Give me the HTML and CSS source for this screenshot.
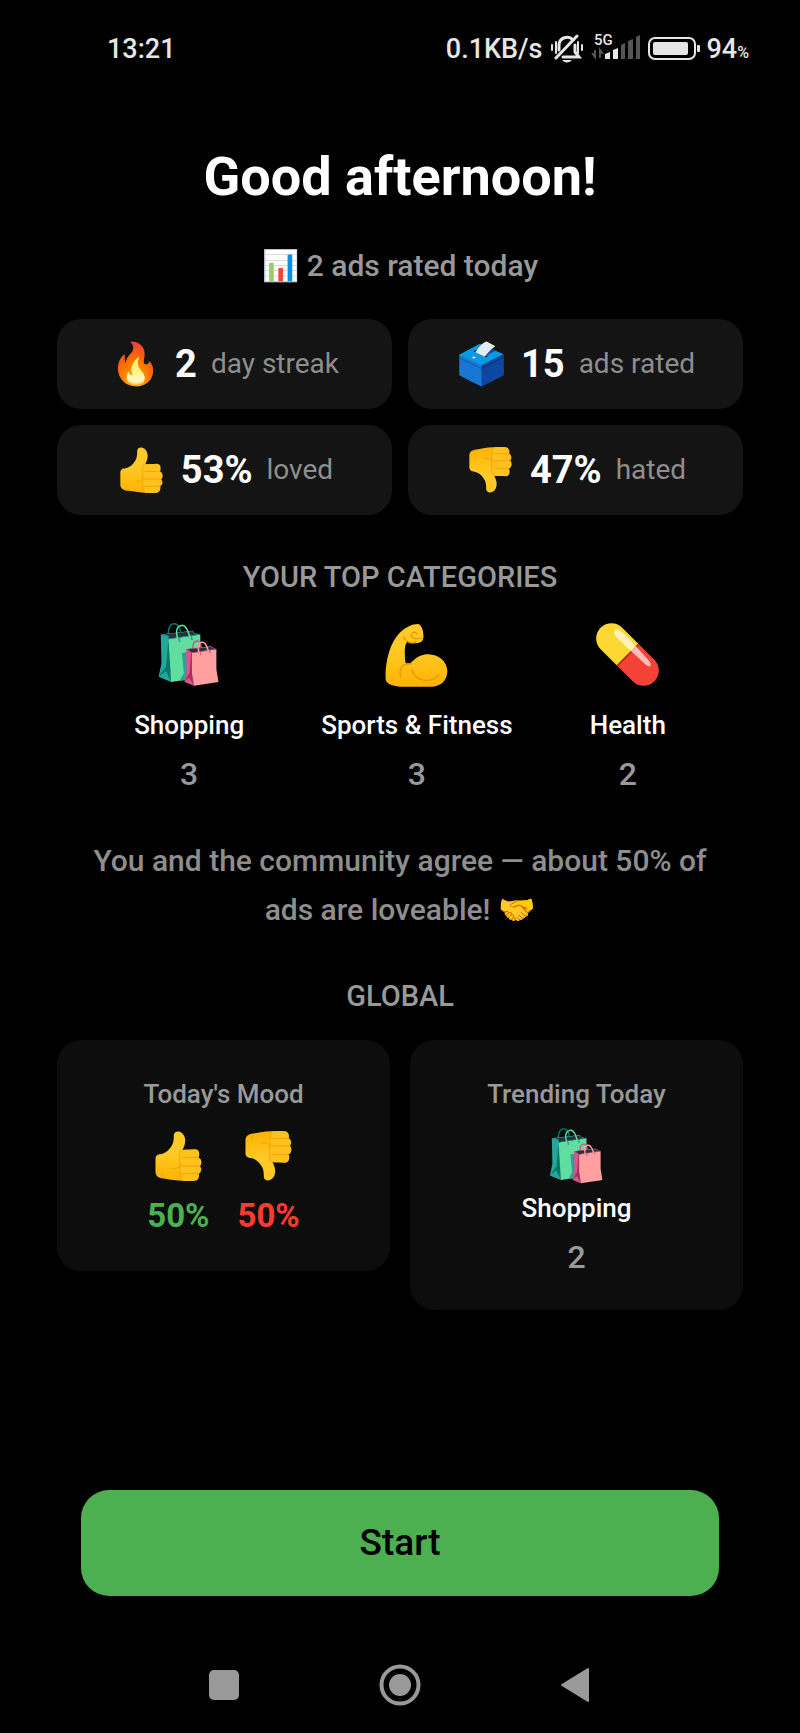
FILE: index.html
```html
<!DOCTYPE html>
<html lang="en">
<head>
  <meta charset="UTF-8">
  <meta name="viewport" content="width=device-width, initial-scale=1">
  <title>Good afternoon!</title>
  <link rel="stylesheet" href="styles.css">
</head>
<body>
<svg class="sprite" width="0" height="0" aria-hidden="true">
  <defs>
    <linearGradient id="skin" x1="0" y1="0" x2="0" y2="1">
      <stop offset="0.400" stop-color="#ffca28"/>
      <stop offset="1" stop-color="#ffb300"/>
    </linearGradient>
    <g id="thumb">
      <path d="M56 12C57-3 86-4 90 26C91 38 86 48 82 57L121 55C134 56 134 74 130 80C142 84 140 102 134 106C141 112 139 124 131 128C134 140 128 149 118 149C80 151 60 148 30 143C15 142 1 138 1 122V82C2 72 10 70 18 69C34 66 44 54 51 42C56 32 56 22 56 12Z" fill="url(#skin)"/>
      <path d="M84 56H120Q132 58 130 69Q130 80 118 80H84Q72 78 73 68Q74 58 84 56ZM82 81H124Q138 82 138 93Q136 105 124 105H82Q71 102 71 93Q72 83 82 81ZM82 106H122Q136 107 135 117Q133 128 122 128H82Q73 125 73 117Q74 108 82 106ZM84 129H118Q130 129 129 139Q127 149 116 149H84Q76 146 76 139Q77 131 84 129Z" fill="#ffc11e"/>
      <path d="M76 58L72 78M74 82V104M74 107V127M77 130V147M80 80H130M80 105H134M80 128H131M50 112Q68 116 76 104M20 124V140" fill="none" stroke="#e99a00" stroke-width="3" stroke-linecap="round" opacity="0.700"/>
    </g>
    <symbol id="thumbs-up" viewBox="0 0 140 150">
      <use href="#thumb"/>
    </symbol>
    <symbol id="thumbs-down" viewBox="0 0 140 150">
      <use href="#thumb" transform="translate(0 150) scale(1 -1)"/>
    </symbol>
    <symbol id="biceps" viewBox="0 0 188 190">
      <path d="M100 0C108 4 114 16 114 28C117 40 114 52 104 56C92 60 78 58 66 54C57 62 58 92 60 110C59 124 74 120 82 112C98 96 115 90 130 91C160 92 188 112 187 145C184 178 160 189 140 189H60C30 190 6 184 1 168C-2 120 12 60 42 28C60 10 80 0 100 0Z" fill="url(#skin)"/>
      <path d="M54 38C62 56 84 62 92 52M110 42C96 48 78 44 78 34C80 24 92 22 96 30M80 120C52 118 40 132 46 160M80 138C92 176 140 180 162 152" fill="none" stroke="#e69a00" stroke-width="4" stroke-linecap="round"/>
    </symbol>
  </defs>
</svg>

<header class="status-bar">
  <span>13:21</span>
  <div class="status-icons">
    <span>0.1KB/s</span>
    <svg viewBox="0 0 34 30" width="34" height="30" role="img" aria-label="Muted">
      <g fill="none" stroke="#e6e6e6" stroke-width="2" stroke-linecap="round">
        <path d="M2 11v5M6 8v11M28 8v11M32 11v5"/>
        <path d="M9 16V11a8 8 0 0 1 14-5M25 11v7l4 5H13" stroke-width="3"/>
        <path d="M27 2L6 24" stroke-width="3"/>
      </g>
      <path d="M12 26h10q-5 5-10 0" fill="#e6e6e6"/>
    </svg>
    <svg viewBox="0 -4 50 40" width="50" height="40" role="img" aria-label="5G signal">
      <text x="3" y="12" class="signal-label">5G</text>
      <path d="M1 20l3 4V17M9 25v-8l3 4" fill="none" stroke="#555" stroke-width="2"/>
      <path d="M14 21l5-2v7h-5zM22 17l5-2v11h-5z" fill="#e6e6e6"/>
      <path d="M30 12l4-2v16h-4zM37 8l5-2v20h-5zM45 4l4-2v24h-4z" fill="#555"/>
    </svg>
    <svg viewBox="0 0 52 24" width="52" height="24" role="img" aria-label="Battery">
      <rect x="1" y="1" width="46" height="21" rx="6" fill="none" stroke="#e6e6e6" stroke-width="2"/>
      <rect x="5" y="5" width="35" height="13" rx="2" fill="#e6e6e6"/>
      <rect x="49" y="8" width="3" height="7" rx="1" fill="#e6e6e6"/>
    </svg>
    <span>94<small>%</small></span>
  </div>
</header>

<main>
  <h1>Good afternoon!</h1>
  <p class="today">📊 2 ads rated today</p>

  <section class="stats">
    <div class="stat">
      <span class="stat-icon">🔥</span>
      <strong>2</strong>
      <span>day streak</span>
    </div>
    <div class="stat">
      <span class="stat-icon">🗳️</span>
      <strong>15</strong>
      <span>ads rated</span>
    </div>
    <div class="stat">
      <svg width="43" height="46" role="img" aria-label="Thumbs up"><use href="#thumbs-up"/></svg>
      <strong>53%</strong>
      <span>loved</span>
    </div>
    <div class="stat">
      <svg width="43" height="46" role="img" aria-label="Thumbs down"><use href="#thumbs-down"/></svg>
      <strong>47%</strong>
      <span>hated</span>
    </div>
  </section>

  <h2>YOUR TOP CATEGORIES</h2>
  <section class="categories">
    <div class="category">
      <span class="category-icon">🛍️</span>
      <span class="name">Shopping</span>
      <span class="count">3</span>
    </div>
    <div class="category">
      <svg width="63" height="63" role="img" aria-label="Flexed biceps"><use href="#biceps"/></svg>
      <span class="name">Sports &amp; Fitness</span>
      <span class="count">3</span>
    </div>
    <div class="category">
      <span class="category-icon">💊</span>
      <span class="name">Health</span>
      <span class="count">2</span>
    </div>
  </section>

  <p class="community">You and the community agree — about 50% of ads are loveable! 🤝</p>

  <h2>GLOBAL</h2>
  <section class="global">
    <div class="card">
      <h3>Today's Mood</h3>
      <div class="mood">
        <div class="vote loved">
          <svg width="47" height="50" role="img" aria-label="Thumbs up"><use href="#thumbs-up"/></svg>
          <strong>50%</strong>
        </div>
        <div class="vote hated">
          <svg width="47" height="50" role="img" aria-label="Thumbs down"><use href="#thumbs-down"/></svg>
          <strong>50%</strong>
        </div>
      </div>
    </div>
    <div class="card">
      <h3>Trending Today</h3>
      <div class="category">
        <span class="trending-icon">🛍️</span>
        <span class="name">Shopping</span>
        <span class="count">2</span>
      </div>
    </div>
  </section>

  <button class="start" type="button">Start</button>
</main>

<nav class="nav-bar">
  <button type="button" aria-label="Recent apps">
    <svg viewBox="0 0 42 42" width="42" height="42"><rect x="6" y="6" width="30" height="30" rx="5"/></svg>
  </button>
  <button type="button" aria-label="Home">
    <svg viewBox="0 0 42 42" width="42" height="42">
      <circle cx="21" cy="21" r="18.500" fill="none" stroke="#999" stroke-width="4"/>
      <circle cx="21" cy="21" r="11"/>
    </svg>
  </button>
  <button type="button" aria-label="Back">
    <svg viewBox="0 0 42 42" width="42" height="42">
      <path d="M7 21L33 5V37Z" stroke="#999" stroke-width="2" stroke-linejoin="round"/>
    </svg>
  </button>
</nav>
</body>
</html>
```

FILE: styles.css
```css
* {
  box-sizing: border-box;
}

body {
  display: flex;
  flex-direction: column;
  min-height: 100vh;
  margin: 0;
  background-color: #000;
  color: #999;
  font-family: Roboto, "Noto Color Emoji", sans-serif;
}

h1, h2, h3, p {
  margin: 0;
}

.sprite {
  display: block;
}

.status-bar {
  display: flex;
  justify-content: space-between;
  align-items: center;
  padding: 29px 51px 28px 107px;
  color: #e6e6e6;
  font-size: 27px;
  font-weight: 500;
  line-height: 32px;
}

.status-icons {
  display: flex;
  align-items: center;
  gap: 7px;
}

.signal-label {
  fill: #e6e6e6;
  font-size: 15px;
}

small {
  font-size: 16px;
  line-height: 16px;
}

main {
  display: flex;
  flex-direction: column;
  flex: 1;
  padding: 48px 57px 40px;
  text-align: center;
}

h1 {
  color: #fff;
  font-size: 54px;
  font-weight: 700;
  line-height: 64px;
}

.today {
  margin: 37px 0 33px;
  font-size: 30px;
  font-weight: 500;
  line-height: 40px;
}

.stats {
  display: grid;
  grid-template-columns: 1fr 1fr;
  gap: 16px;
}

.stat {
  display: flex;
  justify-content: center;
  align-items: center;
  gap: 14px;
  padding: 20px;
  border-radius: 24px;
  background-color: #141414;
  color: #8e8e8e;
  font-size: 28px;
  line-height: 50px;
}

.stat svg {
  margin: 0 4px;
}

.stat-icon {
  font-size: 41px;
}

.stat strong {
  color: #fff;
  font-size: 38px;
}

h2 {
  margin-top: 44px;
  font-size: 29px;
  font-weight: 500;
  line-height: 36px;
}

.categories {
  display: flex;
  justify-content: space-evenly;
  margin-top: 26px;
}

.category {
  display: flex;
  flex-direction: column;
  align-items: center;
}

.category svg {
  margin: 3px 0 22px;
}

.category-icon {
  margin-bottom: 20px;
  font-size: 57px;
  line-height: 68px;
}

.name {
  margin-bottom: 15px;
  color: #fff;
  font-size: 26px;
  font-weight: 500;
  line-height: 32px;
}

.count {
  font-size: 32px;
  font-weight: 500;
  line-height: 36px;
}

.community {
  margin-top: 44px;
  padding: 0 30px;
  color: #8e8e8e;
  font-size: 30px;
  font-weight: 500;
  line-height: 49px;
}

.global {
  display: flex;
  align-items: flex-start;
  gap: 20px;
  margin-top: 26px;
}

.card {
  flex: 1;
  padding: 38px 36px 35px;
  border-radius: 24px;
  background-color: #0d0d0d;
}

h3 {
  margin-bottom: 18px;
  font-size: 26px;
  font-weight: 500;
  line-height: 32px;
}

.mood {
  display: flex;
  justify-content: center;
  gap: 28px;
}

.vote {
  display: flex;
  flex-direction: column;
  align-items: center;
}

.vote svg {
  margin: 3px 0 15px;
}

.vote strong {
  font-size: 33px;
  line-height: 40px;
}

.loved {
  color: #4caf50;
}

.hated {
  color: #ff3b30;
}

.trending-icon {
  margin-bottom: 8px;
  font-size: 50px;
  line-height: 56px;
}

button {
  border: none;
  font-family: inherit;
  cursor: pointer;
}

.start {
  margin: auto 24px 0;
  padding: 32px;
  border-radius: 28px;
  background-color: #4caf50;
  color: #000;
  font-size: 37px;
  font-weight: 500;
  line-height: 42px;
}

.nav-bar {
  display: flex;
  justify-content: center;
  gap: 134px;
  padding: 28px 0 27px;
}

.nav-bar button {
  display: flex;
  padding: 0;
  background: none;
}

.nav-bar svg {
  fill: #999;
}
```
